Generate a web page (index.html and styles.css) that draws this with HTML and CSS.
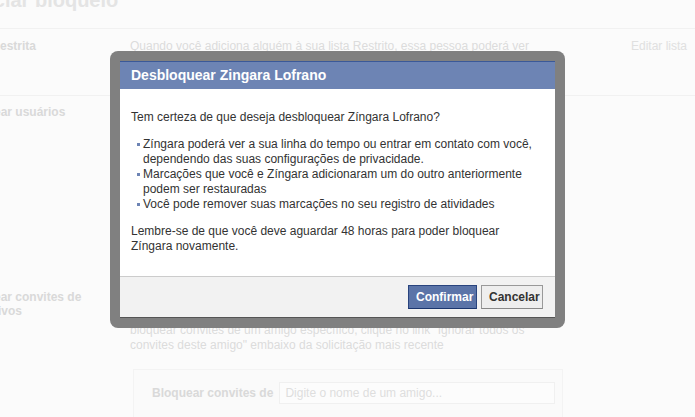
FILE: index.html
```html
<!DOCTYPE html>
<html lang="pt-BR">
<head>
<meta charset="utf-8">
<title>Desbloquear Zíngara Lofrano</title>
<link rel="stylesheet" href="styles.css">
</head>
<body>
<div class="page">
  <h1 class="page-title">Gerenciar bloqueio</h1>
  <div class="row row-1">
    <div class="label">Lista Restrita</div>
    <div class="desc">Quando você adiciona alguém à sua lista Restrito, essa pessoa poderá ver somente as suas publicações públicas.</div>
    <div class="action">Editar lista</div>
  </div>
  <div class="row row-2">
    <div class="label">Bloquear usuários</div>
    <div class="desc"></div>
    <div class="action"></div>
  </div>
  <div class="row row-3">
    <div class="label">Bloquear convites de aplicativos</div>
    <div class="desc">
      <p class="desc-text">Depois de bloquear convites de aplicativos de alguém, você ignorará automaticamente solicitações futuras de aplicativos desse amigo. Para bloquear convites de um amigo específico, clique no link "Ignorar todos os convites deste amigo" embaixo da solicitação mais recente</p>
      <div class="block-box">
        <span class="box-label">Bloquear convites de</span>
        <span class="box-input">Digite o nome de um amigo...</span>
      </div>
    </div>
    <div class="action"></div>
  </div>
</div>

<div class="frame">
  <div class="dialog">
    <div class="dialog-header">Desbloquear Zingara Lofrano</div>
    <div class="dialog-body">
      <p class="para">Tem certeza de que deseja desbloquear Zíngara Lofrano?</p>
      <ul class="list">
        <li>Zíngara poderá ver a sua linha do tempo ou entrar em contato com você, dependendo das suas configurações de privacidade.</li>
        <li>Marcações que você e Zíngara adicionaram um do outro anteriormente podem ser restauradas</li>
        <li>Você pode remover suas marcações no seu registro de atividades</li>
      </ul>
      <p class="para">Lembre-se de que você deve aguardar 48 horas para poder bloquear Zíngara novamente.</p>
    </div>
    <div class="dialog-footer">
      <button class="btn btn-primary">Confirmar</button>
      <button class="btn btn-default">Cancelar</button>
    </div>
  </div>
</div>
</body>
</html>
```

FILE: styles.css
```css
html, body {
  margin: 0;
  padding: 0;
}
body {
  width: 695px;
  height: 417px;
  overflow: hidden;
  background: #fbfbfb;
  font-family: "Liberation Sans", Arial, sans-serif;
  font-size: 12px;
  position: relative;
}
.page {
  margin-left: -40px;
  width: 735px;
  color: #dedede;
}
.page-title {
  margin: -12px 0 0 -24px;
  height: 41px;
  box-sizing: border-box;
  font-size: 20px;
  line-height: 24px;
  font-weight: bold;
  color: #e4e4e4;
  border-bottom: 1px solid #f1f1f1;
}
.row {
  display: grid;
  grid-template-columns: 170px 430px 1fr;
  line-height: 15px;
}
.row-1 {
  height: 67px;
  padding-top: 10px;
  box-sizing: border-box;
  border-bottom: 1px solid #f1f1f1;
}
.row-2 {
  height: 194px;
  padding-top: 9px;
  box-sizing: border-box;
}
.label {
  font-weight: bold;
  color: #d9d9d9;
  width: 135px;
  line-height: 14px;
  font-size: 12px;
}
.desc {
  color: #dcdcdc;
}
.desc-text {
  margin: 3px 0 0;
  width: 410px;
}
.action {
  text-align: right;
  padding-right: 8px;
  color: #e0e0e0;
}
.block-box {
  margin-top: 16px;
  margin-left: 3px;
  width: 430px;
  height: 60px;
  box-sizing: border-box;
  border: 1px solid #f3f3f3;
  background: #fafafa;
  display: flex;
  align-items: flex-start;
  padding: 12px 7px 0 18px;
  gap: 6px;
}
.box-label {
  font-weight: bold;
  color: #d9d9d9;
  line-height: 22px;
}
.box-input {
  flex: 1;
  height: 22px;
  box-sizing: border-box;
  border: 1px solid #f0f0f0;
  background: #fcfcfc;
  color: #dedede;
  padding: 3px 5px;
  line-height: 15px;
}

/* Dialog overlay */
.frame {
  position: absolute;
  left: 110px;
  top: 51px;
  width: 455px;
  padding: 10px;
  box-sizing: border-box;
  background: #808080;
  border-radius: 8px;
}
.dialog {
  background: #fff;
  border-bottom: 1px solid #555;
}
.dialog-header {
  border-top: 1px solid #3b5998;
  background: #6d84b4;
  color: #fff;
  font-weight: bold;
  font-size: 14px;
  height: 27px;
  line-height: 27px;
  padding: 0 11px;
}
.dialog-body {
  height: 187px;
  box-sizing: border-box;
  padding: 21px 18px 0 11px;
  color: #333;
  line-height: 15px;
}
.para {
  margin: 0;
}
.list {
  list-style: none;
  margin: 12px 0 12px;
  padding: 0 0 0 12px;
}
.list li {
  position: relative;
}
.list li::before {
  content: "";
  position: absolute;
  left: -6px;
  top: 6px;
  width: 3px;
  height: 3px;
  background: #6d84b4;
}
.dialog-footer {
  height: 41px;
  box-sizing: border-box;
  border-top: 1px solid #ccc;
  background: #f2f2f2;
  display: flex;
  justify-content: flex-end;
  align-items: flex-start;
  gap: 4px;
  padding: 8px 12px 0;
}
.btn {
  font-family: "Liberation Sans", Arial, sans-serif;
  font-size: 12px;
  font-weight: bold;
  height: 24px;
  line-height: 20px;
  padding: 0 7px;
  margin: 0;
  box-sizing: border-box;
}
.btn-primary {
  width: 69px;
  background: #5b74a8;
  border: 1px solid #29447e;
  border-bottom-color: #1a356e;
  color: #fff;
}
.btn-default {
  width: 62px;
  background: #eee;
  border: 1px solid #999;
  border-bottom-color: #888;
  color: #333;
}
```
